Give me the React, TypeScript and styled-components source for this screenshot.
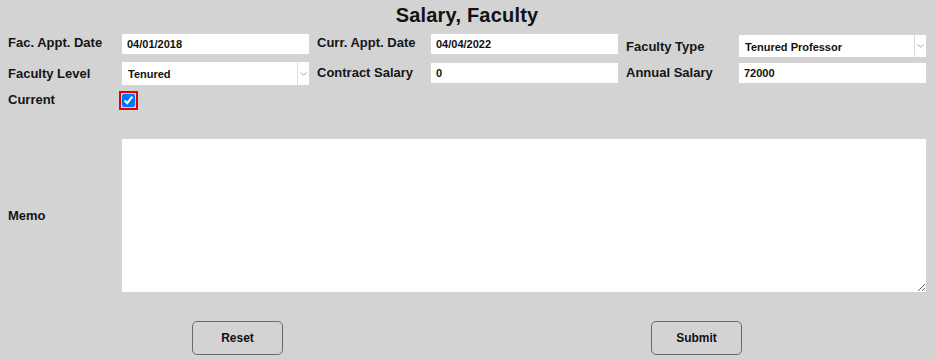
import React, { useState } from "react";
import styled, { createGlobalStyle } from "styled-components";

const GlobalStyle = createGlobalStyle`
  html, body {
    margin: 0;
    padding: 0;
    background: #d3d3d3;
  }
  body {
    font-family: "Liberation Sans", Arial, sans-serif;
  }
`;

const Page = styled.div`
  width: 936px;
  height: 360px;
  background: #d3d3d3;
  box-sizing: border-box;
  padding: 0 10px 0 8px;
  display: flex;
  flex-direction: column;
  overflow: hidden;
`;

const Title = styled.h1`
  margin: 0;
  height: 30px;
  line-height: 30px;
  text-align: center;
  font-size: 20px;
  font-weight: 700;
  color: #111;
  letter-spacing: 0.2px;
`;

const FieldGrid = styled.div`
  margin-top: 4px;
  display: grid;
  grid-template-columns: 106px 187px 106px 187px 105px 187px;
  grid-template-rows: 25px 25px 25px;
  column-gap: 8px;
  row-gap: 4px;
  align-items: start;
`;

const Label = styled.label<{ $top?: number }>`
  display: block;
  padding-top: ${(p) => p.$top ?? 0}px;
  font-size: 13px;
  line-height: 15px;
  font-weight: 700;
  color: #151515;
  white-space: nowrap;
`;

const TextInput = styled.input`
  box-sizing: border-box;
  width: 100%;
  height: 20px;
  margin: 0;
  border: none;
  outline: none;
  background: #fff;
  padding: 0 5px;
  font-family: "Liberation Sans", Arial, sans-serif;
  font-size: 11px;
  font-weight: 700;
  color: #111;
`;

const SelectWrap = styled.div<{ $top?: number; $h?: number }>`
  position: relative;
  margin-top: ${(p) => p.$top ?? 0}px;
  height: ${(p) => p.$h ?? 22}px;
  background: #fff;
`;

const Select = styled.select`
  box-sizing: border-box;
  appearance: none;
  width: 100%;
  height: 100%;
  margin: 0;
  border: none;
  outline: none;
  background: transparent;
  padding: 1px 18px 0 6px;
  font-family: "Liberation Sans", Arial, sans-serif;
  font-size: 11px;
  font-weight: 700;
  color: #111;
`;

const Arrow = styled.span`
  position: absolute;
  top: 0;
  right: 0;
  bottom: 0;
  width: 11px;
  border-left: 1px solid #dcdcdc;
  display: flex;
  align-items: center;
  justify-content: center;
  pointer-events: none;
`;

const CheckFrame = styled.span`
  display: inline-flex;
  margin: -1px 0 0 -3px;
  border: 2px solid #e80000;
  padding: 1px;
`;

const Check = styled.input`
  width: 13px;
  height: 13px;
  margin: 0;
`;

const MemoRow = styled.div`
  margin-top: 22px;
  display: grid;
  grid-template-columns: 114px 1fr;
  align-items: center;
`;

const Memo = styled.textarea`
  box-sizing: border-box;
  width: 804px;
  height: 153px;
  margin: 0;
  border: none;
  outline: none;
  background: #fff;
  resize: both;
  padding: 4px;
  font-family: "Liberation Sans", Arial, sans-serif;
  font-size: 12px;
  display: block;
`;

const ButtonRow = styled.div`
  margin-top: 29px;
  display: grid;
  grid-template-columns: 1fr 1fr;
  justify-items: center;
`;

const Button = styled.button`
  width: 91px;
  height: 34px;
  border: 1px solid #6a6a6a;
  border-radius: 5px;
  background: transparent;
  font-family: "Liberation Sans", Arial, sans-serif;
  font-size: 12px;
  font-weight: 700;
  color: #111;
  cursor: pointer;
`;

const Chevron = () => (
  <svg width="7" height="4" viewBox="0 0 7 4">
    <path d="M0.5 0.5 L3.5 3.2 L6.5 0.5" fill="none" stroke="#a8a8a8" strokeWidth="1" />
  </svg>
);

export default function App() {
  const [current, setCurrent] = useState(true);
  return (
    <Page>
      <GlobalStyle />
      <Title>Salary, Faculty</Title>
      <FieldGrid>
        <Label $top={1}>Fac. Appt. Date</Label>
        <TextInput defaultValue="04/01/2018" />
        <Label $top={1}>Curr. Appt. Date</Label>
        <TextInput defaultValue="04/04/2022" />
        <Label $top={5}>Faculty Type</Label>
        <SelectWrap $top={1} $h={22}>
          <Select defaultValue="Tenured Professor">
            <option>Tenured Professor</option>
            <option>Associate Professor</option>
            <option>Assistant Professor</option>
          </Select>
          <Arrow>
            <Chevron />
          </Arrow>
        </SelectWrap>

        <Label $top={3}>Faculty Level</Label>
        <SelectWrap $top={-1} $h={23}>
          <Select defaultValue="Tenured">
            <option>Tenured</option>
            <option>Non-Tenured</option>
          </Select>
          <Arrow>
            <Chevron />
          </Arrow>
        </SelectWrap>
        <Label $top={2}>Contract Salary</Label>
        <TextInput defaultValue="0" />
        <Label $top={2}>Annual Salary</Label>
        <TextInput defaultValue="72000" />

        <Label $top={0}>Current</Label>
        <div>
          <CheckFrame>
            <Check
              type="checkbox"
              checked={current}
              onChange={(e) => setCurrent(e.target.checked)}
            />
          </CheckFrame>
        </div>
      </FieldGrid>
      <MemoRow>
        <Label>Memo</Label>
        <Memo />
      </MemoRow>
      <ButtonRow>
        <Button type="reset">Reset</Button>
        <Button type="submit">Submit</Button>
      </ButtonRow>
    </Page>
  );
}
